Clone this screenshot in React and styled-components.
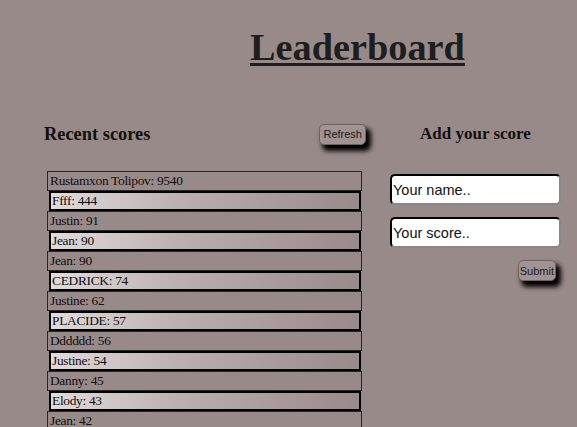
import React from "react";
import styled, { createGlobalStyle } from "styled-components";

const Global = createGlobalStyle`
  html, body {
    margin: 0;
    padding: 0;
    background: #998a8a;
    overflow: hidden;
  }
  body {
    font-family: "Liberation Serif", "Times New Roman", serif;
    color: #1a1a1a;
  }
`;

const Page = styled.div`
  width: 577px;
  height: 427px;
  overflow: hidden;
`;

const Title = styled.h1`
  margin: 26px 0 0 250px;
  font-size: 38.3px;
  line-height: 42px;
  font-weight: 700;
  text-decoration: underline;
  text-decoration-thickness: 3px;
  text-underline-offset: 3px;
  color: #1e1e1e;
`;

const Main = styled.main`
  display: flex;
  align-items: flex-start;
  padding-left: 44px;
  margin-top: 54px;
  gap: 24px;
`;

const LeftCol = styled.section`
  width: 322px;
  display: flex;
  flex-direction: column;
`;

const HeaderRow = styled.div`
  display: flex;
  justify-content: space-between;
  align-items: center;
  height: 24px;
`;

const Heading = styled.h3`
  margin: 0;
  font-size: ${(p) => p.$size || 18.4}px;
  font-weight: 700;
  color: #111;
  text-align: ${(p) => (p.$center ? "center" : "left")};
`;

const ShadowButton = styled.button`
  font-family: "Liberation Sans", Arial, sans-serif;
  font-size: 11px;
  color: #1a1a1a;
  background: #a29393;
  border: 1px solid #6f6363;
  border-radius: 5px;
  padding: 0 ${(p) => p.$pad}px;
  height: 21px;
  box-shadow: 4px 5px 5px 1px #000;
  cursor: pointer;
`;

const List = styled.ul`
  list-style: none;
  margin: 25px 0 0 3px;
  padding: 0;
  width: 315px;
`;

const Row = styled.li`
  box-sizing: border-box;
  height: 20px;
  display: flex;
  align-items: center;
  font-size: 13.4px;
  letter-spacing: -0.3px;
  color: #0d0d0d;
  border: ${(p) => (p.$alt ? "2px solid #000" : "1px solid #2a2424")};
  margin: ${(p) => (p.$alt ? "0 1px 0 2px" : "0")};
  padding-left: ${(p) => (p.$alt ? "1px" : "2px")};
  background: ${(p) =>
    p.$alt
      ? "linear-gradient(100deg, #e2dcdc 0%, #b9adad 45%, #998a8a 100%)"
      : "#998a8a"};
`;

const RightCol = styled.section`
  width: 171px;
  display: flex;
  flex-direction: column;
  padding-top: 2px;
`;

const Form = styled.form`
  display: flex;
  flex-direction: column;
  gap: 12px;
  margin-top: 30px;
`;

const Input = styled.input`
  box-sizing: border-box;
  width: 171px;
  height: 31px;
  border-radius: 5px;
  border: 2px inset #3a3333;
  border-right-color: #888;
  border-bottom-color: #888;
  background: #fff;
  font-family: "Liberation Sans", Arial, sans-serif;
  font-size: 14.5px;
  padding: 0 1px;
  color: #000;
  &::placeholder {
    color: #111;
    opacity: 1;
  }
`;

const SubmitWrap = styled.div`
  display: flex;
  justify-content: flex-end;
  padding-right: 5px;
`;

const scores = [
  ["Rustamxon Tolipov", 9540],
  ["Ffff", 444],
  ["Justin", 91],
  ["Jean", 90],
  ["Jean", 90],
  ["CEDRICK", 74],
  ["Justine", 62],
  ["PLACIDE", 57],
  ["Dddddd", 56],
  ["Justine", 54],
  ["Danny", 45],
  ["Elody", 43],
  ["Jean", 42],
];

export default function App() {
  return (
    <Page>
      <Global />
      <Title>Leaderboard</Title>
      <Main>
        <LeftCol>
          <HeaderRow>
            <Heading>Recent scores</Heading>
            <ShadowButton type="button" $pad={3}>Refresh</ShadowButton>
          </HeaderRow>
          <List>
            {scores.map(([name, score], i) => (
              <Row key={i} $alt={i % 2 === 1}>
                {name}: {score}
              </Row>
            ))}
          </List>
        </LeftCol>
        <RightCol>
          <Heading $center $size={17}>Add your score</Heading>
          <Form onSubmit={(e) => e.preventDefault()}>
            <Input type="text" placeholder="Your name.." />
            <Input type="text" placeholder="Your score.." />
            <SubmitWrap>
              <ShadowButton type="submit" $pad={1}>Submit</ShadowButton>
            </SubmitWrap>
          </Form>
        </RightCol>
      </Main>
    </Page>
  );
}
